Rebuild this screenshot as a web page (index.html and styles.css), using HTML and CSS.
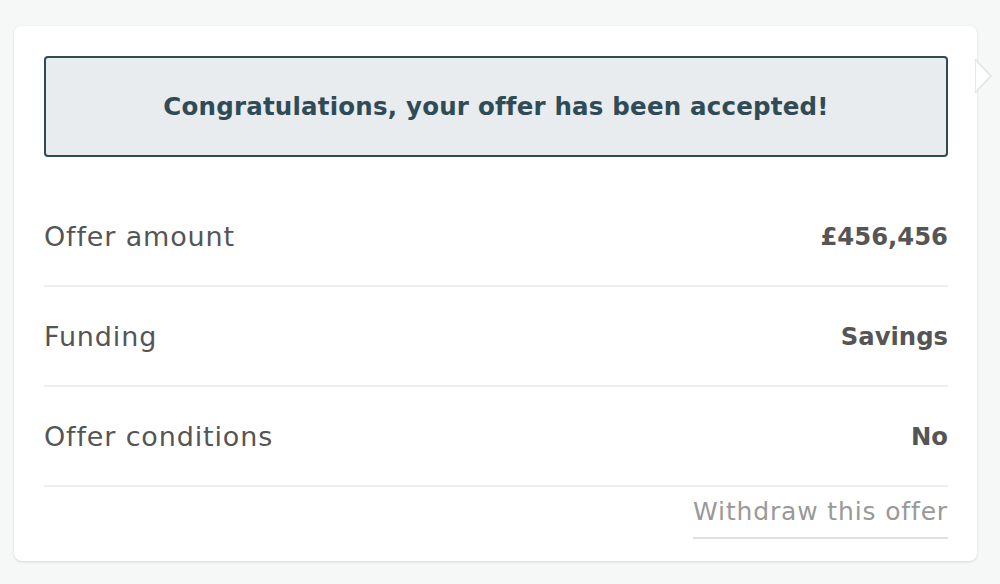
FILE: index.html
```html
<!DOCTYPE html>
<html>
<head>
<meta charset="utf-8">
<link rel="stylesheet" href="styles.css">
</head>
<body>
<div class="card">
  <svg class="arrow" width="18" height="34" viewBox="0 0 18 34"><polygon points="0,0 16,17 0,34" fill="#ffffff" stroke="#e0e2e2" stroke-width="1.5"/><rect x="-2" y="1" width="2" height="32" fill="#fff"/></svg>
  <div class="banner">Congratulations, your offer has been accepted!</div>
  <div class="rows">
    <div class="row"><span class="label">Offer amount</span><span class="value">£456,456</span></div>
    <div class="row"><span class="label">Funding</span><span class="value">Savings</span></div>
    <div class="row"><span class="label">Offer conditions</span><span class="value">No</span></div>
  </div>
  <div class="actions"><a class="withdraw">Withdraw this offer</a></div>
</div>
</body>
</html>
```
FILE: styles.css
```css
html, body {
  margin: 0;
  padding: 0;
}
body {
  background: #f6f7f7;
  font-family: "DejaVu Sans", sans-serif;
  width: 1000px;
  height: 584px;
  overflow: hidden;
}
.card {
  position: relative;
  margin: 26px 0 0 14px;
  width: 963px;
  height: 535px;
  box-sizing: border-box;
  background: #fff;
  border-radius: 8px;
  box-shadow: 0 1px 3px rgba(0,0,0,0.13);
  padding: 30px 29px 0 30px;
}
.arrow {
  position: absolute;
  right: -16px;
  top: 33px;
}
.banner {
  height: 101px;
  box-sizing: border-box;
  border: 2px solid #2f4b56;
  border-radius: 4px;
  background: #e8ecee;
  color: #2f4b56;
  font-weight: bold;
  font-size: 24.5px;
  display: flex;
  align-items: center;
  justify-content: center;
  letter-spacing: 0.2px;
}
.rows {
  margin-top: 30px;
}
.row {
  height: 100px;
  box-sizing: border-box;
  border-bottom: 2px solid #eeeeee;
  display: flex;
  align-items: center;
  justify-content: space-between;
  color: #555;
  font-size: 27px;
}
.label {
  letter-spacing: 0.85px;
}
.value {
  font-weight: bold;
  font-size: 24.3px;
}
.actions {
  display: flex;
  justify-content: flex-end;
  padding-top: 10px;
}
.withdraw {
  color: #999;
  font-size: 25px;
  letter-spacing: 0.85px;
  padding-bottom: 11px;
  border-bottom: 2px solid #e0e0e0;
}
```
